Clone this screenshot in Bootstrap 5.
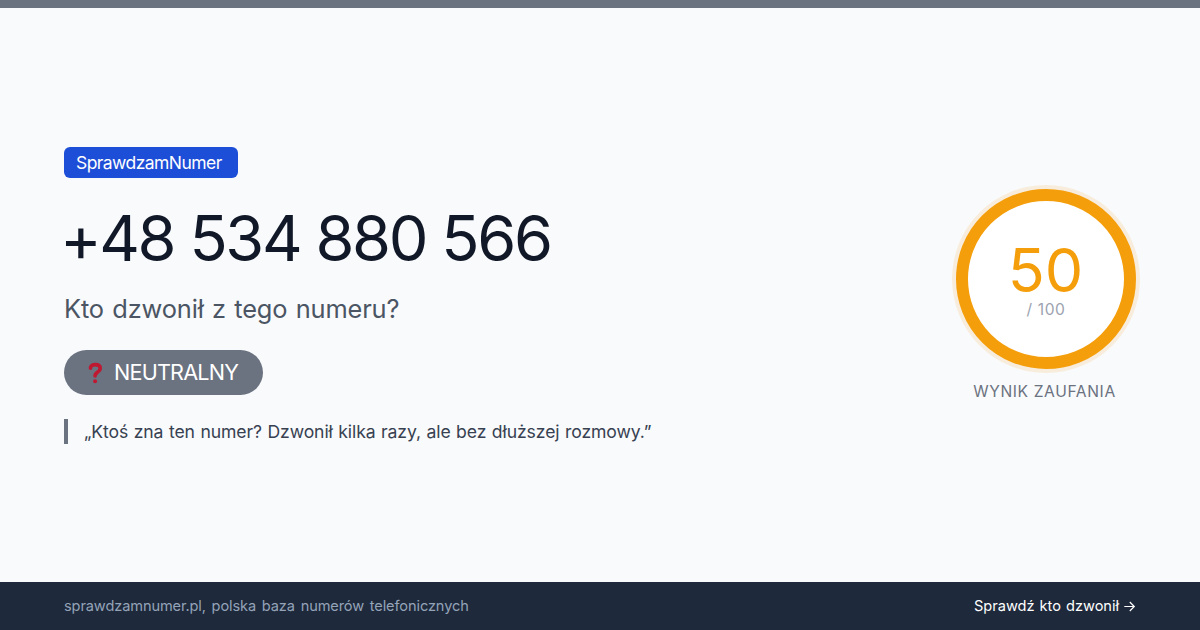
<!DOCTYPE html>
<html lang="pl">
<head>
<meta charset="utf-8">
<meta name="viewport" content="width=device-width, initial-scale=1">
<title>SprawdzamNumer</title>
<link href="https://cdn.jsdelivr.net/npm/bootstrap@5.3.0/dist/css/bootstrap.min.css" rel="stylesheet">
<style>
body{font-family:Inter,"Liberation Sans",sans-serif;background:#f9fafc;height:630px;overflow:hidden;white-space:nowrap}
.topline{height:8px;background:#6b7280}
main,footer{padding-left:64px;padding-right:64px}
.brand-tag{height:31px;width:174px;padding:2px 0 0 12px;border-radius:6px;background:#1d4ed8;font-size:17.5px;letter-spacing:-.56px}
.phone{font-size:63px;line-height:72px;margin:24px 0 19px -4px;letter-spacing:-2.4px;color:#111827;font-weight:400}
.question{font-size:25.4px;line-height:32px;margin-bottom:25px;color:#4b5563;letter-spacing:-.15px;word-spacing:1.4px}
.verdict{height:45px;width:199px;padding-left:24px;background:#6b7280;font-size:21.6px;letter-spacing:-.8px}
.verdict svg{margin-right:11px;margin-top:1px}
.comment{height:25px;margin-top:24px;padding:2px 0 0 16px;border-left:4px solid #6b7280;font-size:17.6px;color:#374151;letter-spacing:-.1px;word-spacing:.7px}
.score-ring{width:180px;height:180px;border:12px solid #f59e0b;background:#fff;box-shadow:0 0 0 4px rgba(245,158,11,.13)}
.score-value{font-size:61px;line-height:60px;letter-spacing:0;margin-left:-1px;margin-top:2px;color:#f59e0b}
.score-max{font-size:15.6px;line-height:20px;letter-spacing:.6px;color:#9ca3af}
.score-label{font-size:15.6px;line-height:20px;margin:13px 1px -1px 0;letter-spacing:.62px;margin-right:3px;color:#6b7280}
footer{height:48px;padding-top:2px;background:#1e293b;font-size:14.6px}
.site{color:#94a3b8;letter-spacing:-.12px;word-spacing:1.8px}
.cta-text{letter-spacing:-.02px;word-spacing:1px}
</style>
</head>
<body class="d-flex flex-column">
<div class="topline flex-shrink-0"></div>
<main class="flex-grow-1 d-flex align-items-center justify-content-between">
  <section class="d-flex flex-column align-items-start">
    <div class="brand-tag d-flex align-items-center text-white">SprawdzamNumer</div>
    <h1 class="phone">+48 534 880 566</h1>
    <div class="question">Kto dzwonił z tego numeru?</div>
    <div class="verdict rounded-pill d-flex align-items-center text-white">
      <svg width="15" height="22" viewBox="0 0 15 22" fill="none"><path d="M2.5 6.1C2.5 3.8 4.6 2.7 7.3 2.7c3 0 4.9 1.3 4.9 3.7 0 3.9-5.1 3.2-5.1 7.4" stroke="#be1931" stroke-width="3.7" stroke-linecap="round"/><circle cx="7.1" cy="19.2" r="2" fill="#be1931"/></svg>
      <span>NEUTRALNY</span>
    </div>
    <div class="comment d-flex align-items-center">„Ktoś zna ten numer? Dzwonił kilka razy, ale bez dłuższej rozmowy.”</div>
  </section>
  <aside class="d-flex flex-column align-items-center">
    <div class="score-ring rounded-circle d-flex flex-column align-items-center justify-content-center">
      <div class="score-value">50</div>
      <div class="score-max">/ 100</div>
    </div>
    <div class="score-label">WYNIK ZAUFANIA</div>
  </aside>
</main>
<footer class="d-flex align-items-center justify-content-between flex-shrink-0">
  <span class="site">sprawdzamnumer.pl, polska baza numerów telefonicznych</span>
  <span class="d-flex align-items-center text-white"><span class="cta-text">Sprawdź kto dzwonił</span>
    <svg class="ms-1" width="13" height="12" viewBox="0 0 13 12" fill="none" stroke="#fff" stroke-width="1.2"><path d="M1.3 5.5h10M6.8 1 11.3 5.5 6.8 10"/></svg>
  </span>
</footer>
</body>
</html>
